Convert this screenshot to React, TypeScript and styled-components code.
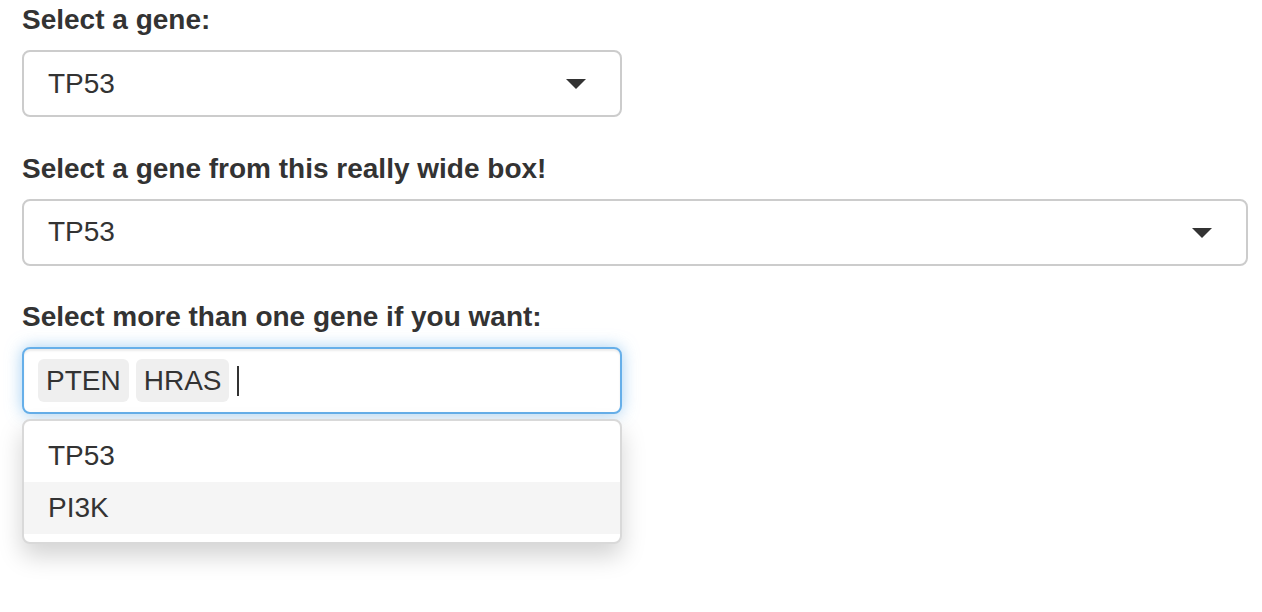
import styled, { createGlobalStyle } from "styled-components";

const GlobalStyle = createGlobalStyle`
  body {
    margin: 0;
    background: #fff;
    font-family: "Liberation Sans", Arial, Helvetica, sans-serif;
    color: #333;
  }
`;

interface WidthProps {
  $width: number;
}

function SingleSelect({ label, value, width }: { label: string; value: string; width: number }) {
  return (
    <FormGroup $width={width}>
      <Label>{label}</Label>
      <SelectBox>
        <Value>{value}</Value>
        <Caret />
      </SelectBox>
    </FormGroup>
  );
}

function App() {
  const chosen = ["PTEN", "HRAS"];
  const options = ["TP53", "PI3K"];

  return (
    <>
      <GlobalStyle />
      <Page>
        <SingleSelect label="Select a gene:" value="TP53" width={600} />
        <SingleSelect
          label="Select a gene from this really wide box!"
          value="TP53"
          width={1226}
        />
        <FormGroup $width={600}>
          <Label>Select more than one gene if you want:</Label>
          <MultiBox>
            {chosen.map((g) => (
              <Chip key={g}>{g}</Chip>
            ))}
            <Cursor />
          </MultiBox>
          <Dropdown>
            {options.map((o, i) => (
              <Option key={o} $active={i === 1}>
                {o}
              </Option>
            ))}
          </Dropdown>
        </FormGroup>
      </Page>
    </>
  );
}

export default App;

const Page = styled.div`
  min-height: 612px;
  padding: 0 0 0 22px;
  box-sizing: border-box;
`;

const FormGroup = styled.div<WidthProps>`
  width: ${(p) => p.$width}px;
  margin-bottom: 31.5px;
`;

const Label = styled.div`
  font-size: 28px;
  line-height: 40px;
  font-weight: bold;
  color: #333;
  margin-bottom: 10px;
`;

const SelectBox = styled.div`
  box-sizing: border-box;
  height: 67px;
  border: 2px solid #ccc;
  border-radius: 8px;
  padding: 0 34px 0 24px;
  display: flex;
  align-items: center;
  justify-content: space-between;
  background: #fff;
`;

const Value = styled.span`
  font-size: 28px;
  color: #333;
`;

const Caret = styled.span`
  width: 0;
  height: 0;
  border-left: 10px solid transparent;
  border-right: 10px solid transparent;
  border-top: 10px solid #333;
  margin-top: 1px;
`;

const MultiBox = styled.div`
  box-sizing: border-box;
  height: 67px;
  border: 2px solid #66afe9;
  border-radius: 8px;
  padding: 0 14px;
  display: flex;
  align-items: center;
  gap: 7px;
  background: #fff;
  box-shadow: inset 0 2px 2px rgba(0, 0, 0, 0.075),
    0 0 16px rgba(102, 175, 233, 0.6);
`;

const Chip = styled.span`
  background: #efefef;
  border-radius: 6px;
  height: 43px;
  padding: 0 8px;
  display: flex;
  align-items: center;
  font-size: 28px;
  color: #333;
`;

const Cursor = styled.span`
  width: 2px;
  height: 30px;
  background: #333;
  margin-left: 1px;
`;

const Dropdown = styled.div`
  margin-top: 5px;
  box-sizing: border-box;
  border: 2px solid #d9d9d9;
  border-radius: 8px;
  background: #fff;
  padding: 9px 0 8px;
  box-shadow: 0 12px 24px rgba(0, 0, 0, 0.175);
`;

const Option = styled.div<{ $active: boolean }>`
  height: 52px;
  display: flex;
  align-items: center;
  padding-left: 24px;
  font-size: 28px;
  color: #333;
  background: ${(p) => (p.$active ? "#f5f5f5" : "transparent")};
`;
